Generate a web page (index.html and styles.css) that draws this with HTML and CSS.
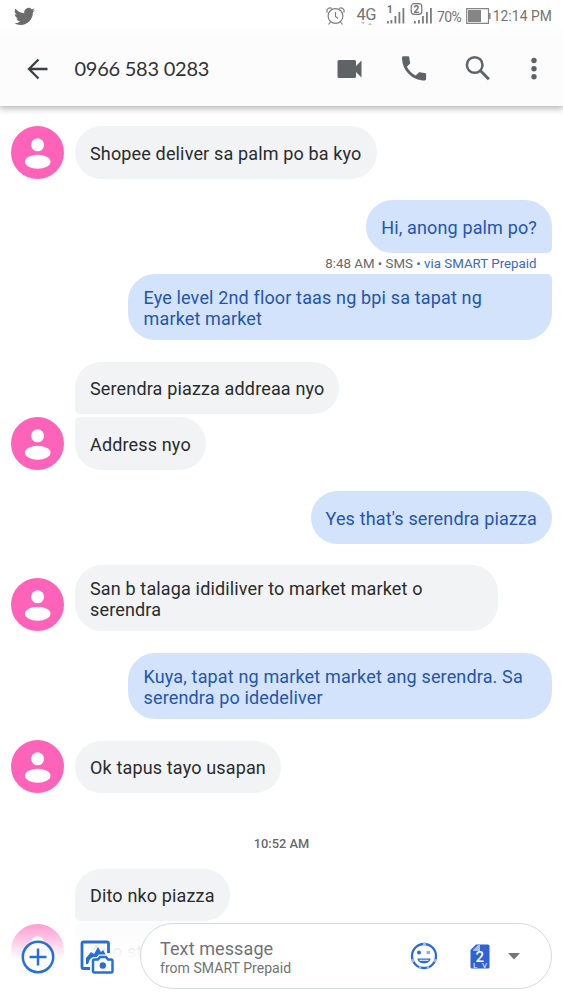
FILE: index.html
```html
<!DOCTYPE html>
<html lang="en">
<head>
<meta charset="utf-8">
<title>Messages</title>
<link rel="stylesheet" href="styles.css">
</head>
<body>
<svg class="defs" aria-hidden="true">
  <symbol id="person" viewBox="0 0 53 53"><circle cx="26.5" cy="26.5" r="26.5" fill="#ff63b9"/><circle cx="26.6" cy="18.8" r="6.5" fill="#fff"/><ellipse cx="26.7" cy="35.7" rx="12.8" ry="7" fill="#fff"/></symbol>
</svg>
<div class="screen">
  <header class="top">
    <div class="status">
      <svg class="bird" viewBox="0 0 24 24"><path d="M23.95 4.57a10 10 0 0 1-2.82.77 4.96 4.96 0 0 0 2.16-2.72c-.95.55-2 .96-3.13 1.18a4.92 4.92 0 0 0-8.38 4.48C7.69 8.1 4.07 6.13 1.64 3.16a4.92 4.92 0 0 0 1.52 6.57 4.9 4.9 0 0 1-2.23-.61v.06c0 2.39 1.7 4.38 3.95 4.83a5 5 0 0 1-2.21.08 4.94 4.94 0 0 0 4.6 3.42A9.87 9.87 0 0 1 0 19.54a13.99 13.99 0 0 0 7.56 2.21c9.05 0 14-7.5 14-13.98 0-.21 0-.42-.02-.63a9.94 9.94 0 0 0 2.46-2.55z"/></svg>
      <svg class="indicators" viewBox="0 0 112 32">
        <g fill="none" stroke="#808080" stroke-width="1.2"><circle cx="9.5" cy="16" r="7.4"/><path d="M9.5 12v4.5l2.5 2M4.5 22l-2 2.5M14.5 22l2 2.5M1.3 12.5c-1.5-3 2-6 4.5-4M17.7 12.5c1.5-3-2-6-4.5-4"/></g>
        <path d="M35 22h4l-2 2.5zM42 25h4l-2-2.5z" fill="#c4c4c4"/>
        <g fill="#7b7b7b"><path d="M61 21h1.800v2.500H61zM64.500 20h1.800v3.500h-1.800zM68.500 16h1.800v7.500h-1.800zM72.500 12h1.800v11.500h-1.800zM76.500 8h1.800v15.500h-1.800z"/><path d="M88 21h1.800v2.500H88zM92 20h1.800v3.500H92zM96 16h1.800v7.500H96zM100 12h1.800v11.500H100zM104 8h1.800v15.500H104z"/></g>
        <rect x="85.200" y="3.700" width="10.600" height="10.600" rx="3" fill="#fff" stroke="#777" stroke-width="1.200"/>
        <text x="30.500" y="20" class="net" textLength="20">4G</text>
        <text x="61" y="13" class="sim">1</text><text x="87.600" y="12.700" class="sim">2</text>
      </svg>
      <span class="percent">70%</span>
      <svg class="battery" viewBox="0 0 25 16"><path d="M.7.700h21.800v14.600H.700z" fill="#fff" stroke="#858585" stroke-width="1.200"/><path d="M2 2h13v12H2z" fill="#858585"/><path d="M23 5h1.500v6H23z" fill="#858585"/></svg>
      <span class="clock">12:14 PM</span>
    </div>
    <div class="bar">
      <svg class="back" viewBox="0 0 22 22"><path d="M20.500 11H2M11.500 1.500l-9.500 9.500 9.500 9.500" fill="none" stroke="#3c4043" stroke-width="2.300"/></svg>
      <h1 class="number">0966 583 0283</h1>
      <svg class="actions" viewBox="0 0 210 32">
        <g fill="#5f6368">
          <path d="M2 7h15.500a1.500 1.500 0 0 1 1.500 1.500v4.500l5.500-5.500v17L19 19v4.500a1.500 1.500 0 0 1-1.500 1.500H2A1.500 1.500 0 0 1 .500 23.500v-15A1.500 1.500 0 0 1 2 7z"/>
          <path d="M69.900 13.800a20.200 20.200 0 0 0 8.800 8.800l2.950-2.950c.360-.36.890-.48 1.350-.32 1.500.49 3.110.76 4.770.760.740 0 1.340.6 1.340 1.340v4.680c0 .740-.600 1.340-1.340 1.340C75.170 27.450 65 17.300 65 4.680 65 3.940 65.600 3.340 66.340 3.340h4.700c.740 0 1.340.6 1.340 1.340 0 1.680.270 3.280.760 4.770.150.470.040.990-.330 1.360z"/>
          <circle cx="197" cy="7.500" r="2.700"/><circle cx="197" cy="15.700" r="2.700"/><circle cx="197" cy="23.700" r="2.700"/>
        </g>
        <g fill="none" stroke="#5f6368" stroke-width="2.500"><circle cx="137.700" cy="12" r="7.800"/><path d="M143.200 17.500l8.700 8.700" stroke-width="3"/></g>
      </svg>
    </div>
  </header>

  <main class="chat">
    <div class="row in first"><svg class="avatar"><use href="#person"/></svg><p class="bubble">Shopee deliver sa palm po ba kyo</p></div>
    <div class="row out"><p class="bubble join-below">Hi, anong palm po?</p></div>
    <p class="meta">8:48 AM • SMS <span class="via">• via SMART Prepaid</span></p>
    <div class="row out next"><p class="bubble wide join-above">Eye level 2nd floor taas ng bpi sa tapat ng<br>market market</p></div>
    <div class="row in"><p class="bubble join-below">Serendra piazza addreaa nyo</p></div>
    <div class="row in follow"><svg class="avatar"><use href="#person"/></svg><p class="bubble join-above">Address nyo</p></div>
    <div class="row out"><p class="bubble">Yes that's serendra piazza</p></div>
    <div class="row in"><svg class="avatar"><use href="#person"/></svg><p class="bubble wide">San b talaga ididiliver to market market o<br>serendra</p></div>
    <div class="row out"><p class="bubble wide">Kuya, tapat ng market market ang serendra. Sa<br>serendra po idedeliver</p></div>
    <div class="row in"><svg class="avatar"><use href="#person"/></svg><p class="bubble">Ok tapus tayo usapan</p></div>
    <p class="time">10:52 AM</p>
    <div class="row in dated"><p class="bubble join-below">Dito nko piazza</p></div>
    <div class="row in follow"><svg class="avatar"><use href="#person"/></svg><p class="bubble join-above faded">Ano store</p></div>
  </main>

  <footer class="composer">
    <svg class="plus" viewBox="0 0 34 34"><g fill="none" stroke="#2470d8" stroke-width="2.500"><circle cx="17" cy="17" r="15.200" fill="#fff" fill-opacity=".75"/><path d="M17 8.500v17M8.500 17h17"/></g></svg>
    <svg class="gallery" viewBox="0 0 34 34"><path d="M10 28.500H3.500A1.500 1.500 0 0 1 2 27V3.500A1.500 1.500 0 0 1 3.500 2h23.500A1.500 1.500 0 0 1 28.500 3.500V13" fill="none" stroke="#2470d8" stroke-width="2.800"/><path d="M6 24v-6l5-6 3 2 4-7 3 5 2-2 3 5h-3l-4 0-2 3h-4l-3 1-2 5z" fill="#2470d8"/><path d="M14.500 19.500h3.500l2-2.500h6l2 2.500h3a1.500 1.500 0 0 1 1.500 1.500v10a1.500 1.500 0 0 1-1.500 1.500H14.500A1.500 1.500 0 0 1 13 31V21a1.500 1.500 0 0 1 1.500-1.500z" fill="#fff" stroke="#fff" stroke-width="5"/><path d="M14.500 19.500h3.500l2-2.500h6l2 2.500h3a1.500 1.500 0 0 1 1.500 1.500v10a1.500 1.500 0 0 1-1.500 1.500H14.500A1.500 1.500 0 0 1 13 31V21a1.500 1.500 0 0 1 1.500-1.500z" fill="#fff" stroke="#2470d8" stroke-width="2.500"/><circle cx="22.800" cy="25.500" r="3.200" fill="#2470d8"/></svg>
    <div class="field">
      <div class="hint"><span class="placeholder">Text message</span><span class="carrier">from SMART Prepaid</span></div>
      <svg class="smile" viewBox="0 0 28 28"><circle cx="14" cy="14" r="12" fill="none" stroke="#2c6bd4" stroke-width="2.300"/><path d="M13 2h3M2.500 17l1 3M24.500 20l1-3M9 25l2 .7M17 25.700l2-.7" stroke="#9dbcf0" stroke-width="2.300"/><circle cx="9" cy="10.500" r="2" fill="#2c6bd4"/><path d="M16.500 9h3.500v3h-3.500z" fill="#8db0ea"/><path d="M7.500 16.500h13c-.500 6.500-12.500 6.500-13 0z" fill="#2c6bd4"/><path d="M9.500 18.300h9" stroke="#dce8fb" stroke-width="1.200"/></svg>
      <svg class="simcard" viewBox="0 0 20 25"><path d="M6 .500h12A1.500 1.500 0 0 1 19.500 2v21a1.500 1.500 0 0 1-1.500 1.500H2A1.500 1.500 0 0 1 .500 23V6z" fill="#2f63d3"/><path d="M3 6l5-5h2v6H3z" fill="#a9bdec"/><text x="5.500" y="17.500" class="slot">2</text><text x="3" y="24" class="lv" textLength="14">LV</text></svg>
      <svg class="caret" viewBox="0 0 12 7"><path d="M0 0h12L6 6.500z" fill="#737679"/></svg>
    </div>
  </footer>
</div>
</body>
</html>
```
FILE: styles.css
```css
* { box-sizing: border-box; }
body, p, h1 { margin: 0; }
body { background: #fff; font-family: Roboto, sans-serif; }
svg { display: block; flex: none; }
.defs { position: absolute; width: 0; height: 0; }
.screen { position: relative; width: 563px; height: 1000px; overflow: hidden; display: flex; flex-direction: column; background: #fff; }

.top { height: 106px; flex: none; background: linear-gradient(#fff 20px, #fcfcfc 40px); box-shadow: 0 1px 7px 1px rgba(0,0,0,.33); z-index: 1; }
.status { height: 32px; display: flex; align-items: center; padding: 0 11px 0 14px; color: #737373; }
.bird { width: 21px; height: 21px; fill: #6b6b6b; }
.indicators { width: 112px; height: 32px; margin-left: 291px; }
.net { font: 16.5px Roboto, sans-serif; fill: #737373; }
.sim { font: 700 10px Roboto, sans-serif; fill: #707070; }
.percent { width: 29px; margin-left: -1px; padding-top: 1px; font-size: 14px; letter-spacing: -.6px; white-space: nowrap; }
.battery { width: 25px; height: 16px; margin: 0 2px 0 1px; }
.clock { font-size: 13.8px; letter-spacing: .1px; white-space: nowrap; }
.bar { height: 74px; display: flex; align-items: center; padding: 0 16px 0 27px; }
.back { width: 22px; height: 22px; }
.number { margin: -2px 0 0 25.5px; font: 400 20px/26px Lato, sans-serif; letter-spacing: -.25px; color: #303236; white-space: nowrap; }
.actions { width: 210px; height: 32px; margin-left: auto; }

.chat { padding: 0 11px; }
.row { display: flex; align-items: flex-end; margin-top: 21.5px; }
.first { margin-top: 19.5px; }
.in { padding-left: 64px; }
.in:has(.avatar) { padding-left: 0; gap: 11px; }
.out { justify-content: flex-end; }
.next { margin-top: 0; }
.follow { margin-top: 2.5px; }
.avatar { width: 53px; height: 53px; }
.bubble { min-height: 52.5px; padding: 16.5px 15px 15px; border-radius: 27px; background: #f1f3f4; color: #292b2e; font-size: 18px; letter-spacing: .15px; line-height: 21px; white-space: nowrap; }
.out .bubble { background: #d3e3fc; color: #2455ae; }
.wide { width: 424px; padding: 13px 15px 11px 15.5px; }
.in .wide { width: 423px; padding-left: 15px; }
.in .join-below { border-bottom-left-radius: 5px; }
.in .join-above { border-top-left-radius: 5px; }
.out .join-below { border-bottom-right-radius: 5px; }
.out .join-above { border-top-right-radius: 5px; }
.in .faded { background: #f8f9f9; color: #999; }
.meta { height: 21.5px; padding-right: 15.5px; text-align: right; font-size: 13.3px; line-height: 21px; color: #67696c; }
.via { color: #3969cb; }
.time { margin-top: 41px; text-align: center; font-size: 12.8px; line-height: 20px; font-weight: 500; color: #67696c; }
.dated { margin-top: 14.5px; }

.composer { position: absolute; left: 0; right: 0; bottom: 0; height: 79px; display: flex; align-items: flex-start; padding: 2px 11px 0 21px; background: linear-gradient(rgba(255,255,255,.3), #fff 38px); }
.plus { width: 34px; height: 34px; margin-top: 17px; }
.gallery { width: 34px; height: 34px; margin: 17px 0 0 25px; }
.field { width: 412px; height: 66px; margin-left: 26px; border: 1px solid #d9dadc; border-radius: 33px; background: #fff; display: flex; align-items: center; padding-left: 19px; }
.hint { width: 250px; padding-top: 3px; display: flex; flex-direction: column; color: #707377; }
.placeholder { font-size: 18px; letter-spacing: .1px; line-height: 20px; }
.carrier { font-size: 14px; letter-spacing: .05px; line-height: 18px; }
.smile { width: 28px; height: 28px; }
.simcard { width: 20px; height: 25px; margin-left: 32px; }
.slot { font: 500 15px Roboto, sans-serif; fill: #fff; }
.lv { font: 8px Roboto, sans-serif; fill: #fff; }
.caret { width: 12px; height: 7px; margin-left: 18px; }
```
